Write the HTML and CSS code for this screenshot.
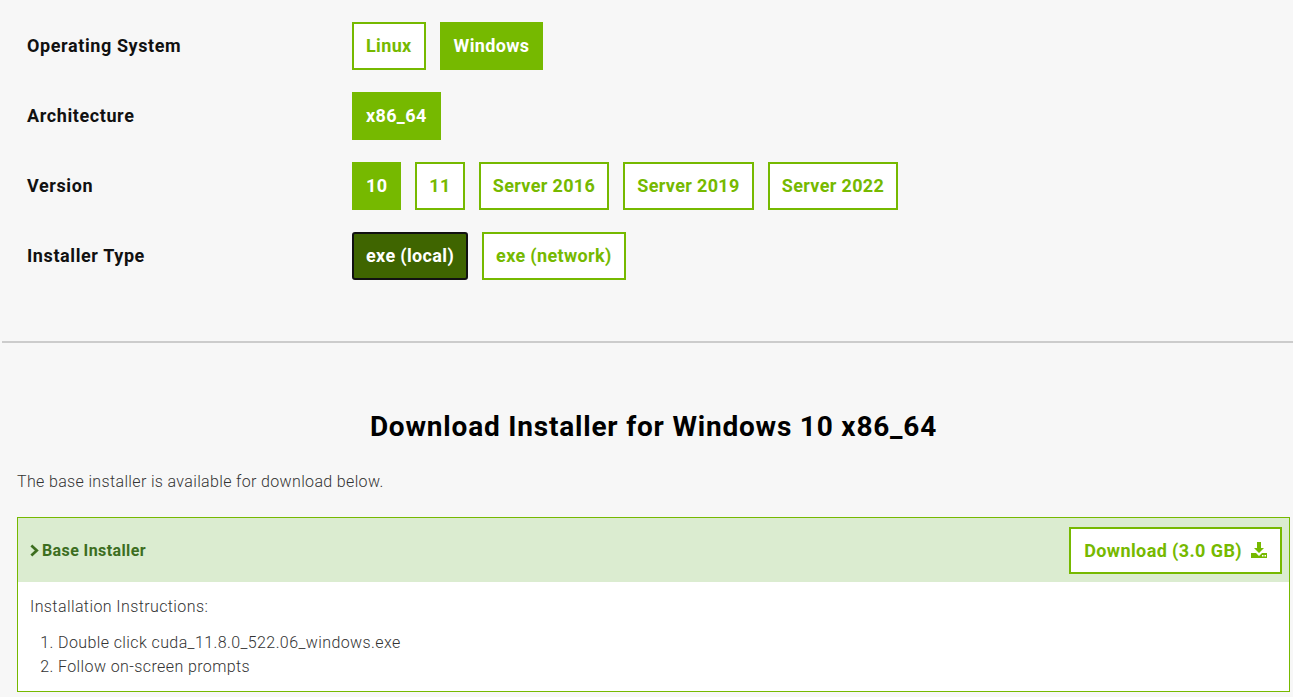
FILE: index.html
```html
<!DOCTYPE html>
<html>
<head>
<meta charset="utf-8">
<link rel="stylesheet" href="styles.css">
</head>
<body>
<section class="selector">
  <div class="row">
    <div class="label">Operating System</div>
    <div class="opts"><span class="btn">Linux</span><span class="btn on">Windows</span></div>
  </div>
  <div class="row">
    <div class="label">Architecture</div>
    <div class="opts"><span class="btn on">x86_64</span></div>
  </div>
  <div class="row">
    <div class="label">Version</div>
    <div class="opts"><span class="btn on">10</span><span class="btn">11</span><span class="btn">Server 2016</span><span class="btn">Server 2019</span><span class="btn">Server 2022</span></div>
  </div>
  <div class="row">
    <div class="label">Installer Type</div>
    <div class="opts"><span class="btn dark">exe (local)</span><span class="btn">exe (network)</span></div>
  </div>
</section>
<hr class="divider">
<section class="download">
  <h2 class="title">Download Installer for Windows 10 x86_64</h2>
  <p class="intro">The base installer is available for download below.</p>
  <div class="panel">
    <div class="panel-head">
      <div class="panel-title"><svg class="chev" viewBox="0 0 10 14" width="9" height="13"><path d="M1.5 1.5 L7.5 7 L1.5 12.5" fill="none" stroke="#3d6e1f" stroke-width="3"/></svg>Base Installer</div>
      <span class="dl">Download (3.0 GB)<svg class="dlicon" viewBox="0 0 16 16" width="16" height="16"><path d="M6 0h4v6h3l-5 5-5-5h3z" fill="#76b900"/><path d="M0 11h5l3 3 3-3h5v5H0z" fill="#76b900"/><rect x="11" y="13" width="1.5" height="1.5" fill="#fff"/><rect x="13.5" y="13" width="1.5" height="1.5" fill="#fff"/></svg></span>
    </div>
    <div class="panel-body">
      <p class="inst">Installation Instructions:</p>
      <ol class="steps">
        <li>Double click cuda_11.8.0_522.06_windows.exe</li>
        <li>Follow on-screen prompts</li>
      </ol>
    </div>
  </div>
</section>
</body>
</html>
```
FILE: styles.css
```css
html, body {
  margin: 0;
  padding: 0;
  background: #f7f7f7;
  font-family: Roboto, "Liberation Sans", sans-serif;
  color: #1a1a1a;
}
.selector {
  padding: 22px 0 0 27px;
  height: 297px;
  box-sizing: border-box;
  display: flex;
  flex-direction: column;
  gap: 22px;
}
.row {
  display: flex;
  align-items: center;
  height: 48px;
}
.label {
  width: 325px;
  font-size: 18px;
  font-weight: 700;
  letter-spacing: 0.6px;
  color: #111;
  padding-bottom: 2px;
}
.opts {
  display: flex;
  gap: 14px;
}
.btn {
  box-sizing: border-box;
  height: 48px;
  display: flex;
  align-items: center;
  padding: 0 12px 2px 12px;
  border: 2px solid #76b900;
  background: #fff;
  color: #76b900;
  font-size: 18px;
  font-weight: 700;
  letter-spacing: 0.35px;
}
.btn.on {
  background: #76b900;
  color: #fff;
}
.btn.dark {
  background: #3f6500;
  color: #fff;
  border-color: #111;
  border-radius: 3px;
}
.divider {
  margin: 44px 0 0 2px;
  border: 0;
  border-top: 2px solid #cccccc;
  height: 0;
}
.download {
  padding: 0 3px 0 17px;
}
.title {
  margin: 67px 0 0 0;
  text-align: center;
  font-size: 28px;
  font-weight: 700;
  letter-spacing: 0.8px;
  color: #000;
  line-height: 34px;
}
.intro {
  margin: 28px 0 0 0;
  font-size: 16px;
  font-weight: 300;
  letter-spacing: 0.35px;
  color: #333;
  line-height: 20px;
}
.panel {
  margin-top: 25px;
  border: 1px solid #76b900;
  background: #fff;
}
.panel-head {
  height: 64px;
  background: #dbecd0;
  display: flex;
  align-items: center;
  justify-content: space-between;
  padding: 0 7px 0 12px;
}
.panel-title {
  display: flex;
  align-items: center;
  gap: 3px;
  font-size: 16px;
  font-weight: 700;
  letter-spacing: 0.4px;
  color: #3d6e1f;
}
.dl {
  box-sizing: border-box;
  height: 47px;
  display: flex;
  align-items: center;
  gap: 9px;
  padding: 0 13px;
  background: #fff;
  border: 2px solid #76b900;
  color: #76b900;
  font-size: 18px;
  font-weight: 700;
  letter-spacing: 0.4px;
}
.panel-body {
  padding: 15px 12px 12px 12px;
  font-size: 16px;
  font-weight: 300;
  letter-spacing: 0.4px;
  color: #333;
}
.inst {
  margin: 0;
  line-height: 20px;
}
.steps {
  margin: 14px 0 0 0;
  padding-left: 28px;
  line-height: 24px;
}
```
